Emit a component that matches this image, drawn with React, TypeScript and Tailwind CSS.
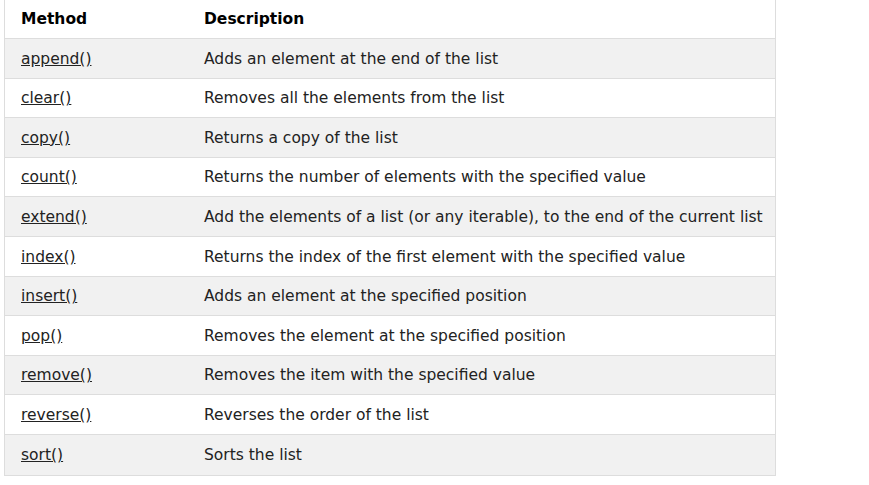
const methods = [
  ['append()', 'Adds an element at the end of the list'],
  ['clear()', 'Removes all the elements from the list'],
  ['copy()', 'Returns a copy of the list'],
  ['count()', 'Returns the number of elements with the specified value'],
  ['extend()', 'Add the elements of a list (or any iterable), to the end of the current list'],
  ['index()', 'Returns the index of the first element with the specified value'],
  ['insert()', 'Adds an element at the specified position'],
  ['pop()', 'Removes the element at the specified position'],
  ['remove()', 'Removes the item with the specified value'],
  ['reverse()', 'Reverses the order of the list'],
  ['sort()', 'Sorts the list'],
];

export default function App() {
  return (
    <div className="w-[869px] h-[485px] bg-white font-['DejaVu_Sans',Verdana,sans-serif] text-[15.5px] text-[#222]">
      <div className="ml-[4px] w-[772px] border-x border-b border-[#ddd]">
        <div className="flex items-center h-[39px] pt-[1px] border-b border-[#ddd] bg-white font-bold text-black">
          <div className="w-[199px] pl-[16px]">Method</div>
          <div>Description</div>
        </div>
        {methods.map(([name, desc], i) => (
          <div
            key={name}
            className={`flex items-center h-[39.6px] pt-[2px] border-b border-[#ddd] last:border-b-0 ${i % 2 === 0 ? 'bg-[#f1f1f1]' : 'bg-white'}`}
          >
            <div className="w-[199px] pl-[16px]">
              <a href="#" className="underline text-[#222]">
                {name}
              </a>
            </div>
            <div>{desc}</div>
          </div>
        ))}
      </div>
    </div>
  );
}
